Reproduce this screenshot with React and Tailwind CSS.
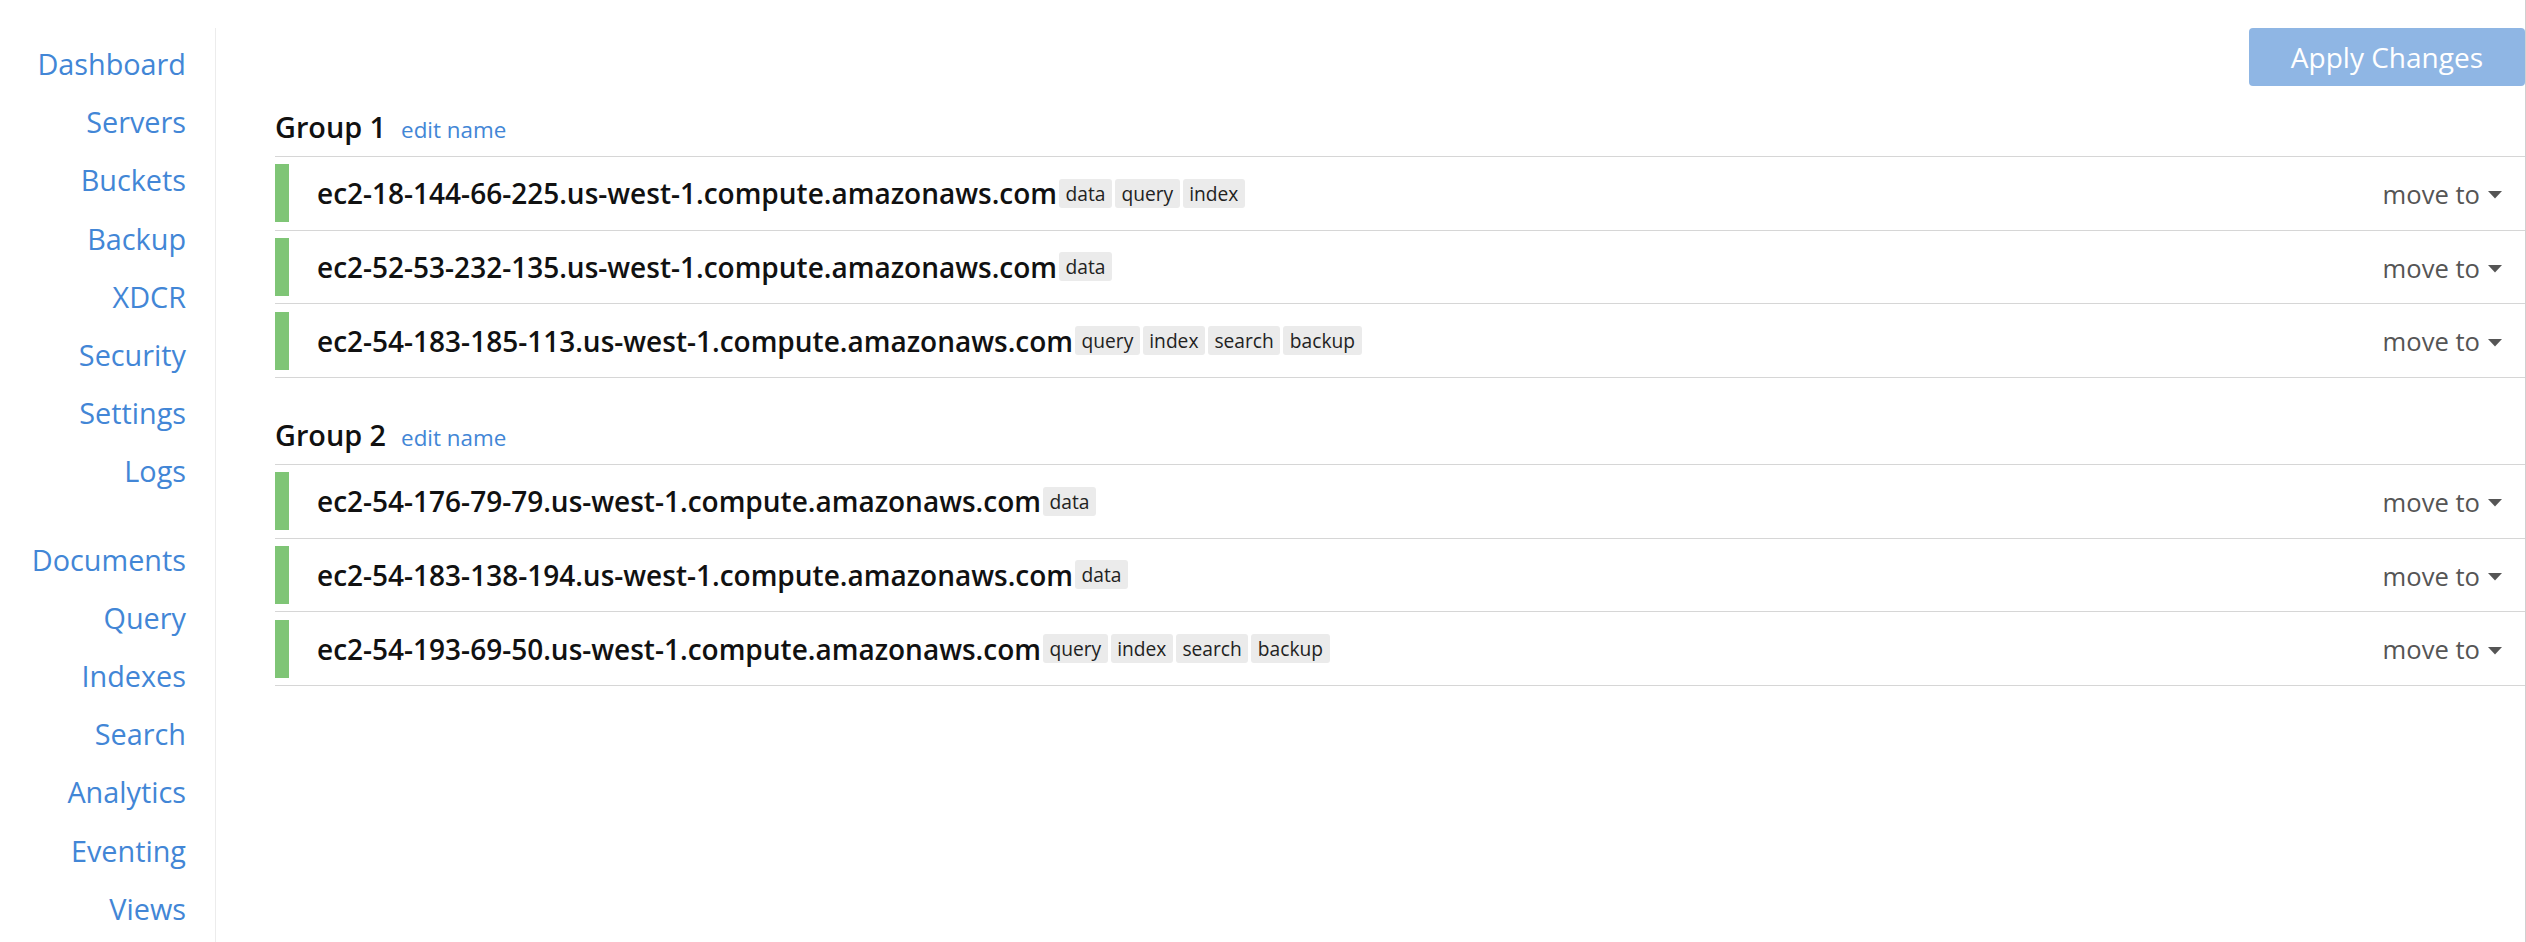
import React from 'react';

const navTop = ['Dashboard', 'Servers', 'Buckets', 'Backup', 'XDCR', 'Security', 'Settings', 'Logs'];
const navBottom = ['Documents', 'Query', 'Indexes', 'Search', 'Analytics', 'Eventing', 'Views'];

const groups = [
  {
    name: 'Group 1',
    servers: [
      { host: 'ec2-18-144-66-225.us-west-1.compute.amazonaws.com', services: ['data', 'query', 'index'] },
      { host: 'ec2-52-53-232-135.us-west-1.compute.amazonaws.com', services: ['data'] },
      { host: 'ec2-54-183-185-113.us-west-1.compute.amazonaws.com', services: ['query', 'index', 'search', 'backup'] },
    ],
  },
  {
    name: 'Group 2',
    servers: [
      { host: 'ec2-54-176-79-79.us-west-1.compute.amazonaws.com', services: ['data'] },
      { host: 'ec2-54-183-138-194.us-west-1.compute.amazonaws.com', services: ['data'] },
      { host: 'ec2-54-193-69-50.us-west-1.compute.amazonaws.com', services: ['query', 'index', 'search', 'backup'] },
    ],
  },
];

function ServerRow({ server }) {
  return (
    <div className="flex items-center border-b border-[#d6d6d6] py-[7.33px]">
      <div className="w-[14px] h-[58px] bg-[#7fc576] shrink-0" />
      <span className="ml-[28px] text-[28px] leading-[1.5] font-semibold text-[#111]">
        {server.host}
      </span>
      <div className="ml-[2px] flex items-center gap-[3px]">
        {server.services.map((s) => (
          <span key={s} className="px-[6.5px] text-[19.2px] leading-[29px] bg-[#ebebeb] rounded-[3px] text-[#222]">
            {s}
          </span>
        ))}
      </div>
      <div className="ml-auto pr-[23px] pt-[4px] flex items-center text-[25.6px] leading-[1.5] text-[#555]">
        move to
        <svg className="ml-[8px]" width="14" height="8" viewBox="0 0 14 8">
          <path d="M0 0 L14 0 L7 7.5 Z" fill="#555" />
        </svg>
      </div>
    </div>
  );
}

function App() {
  return (
    <div className="flex min-h-screen bg-white font-['Open_Sans',sans-serif]">
      {/* Sidebar */}
      <aside className="w-[216px] shrink-0 pt-[28px] flex flex-col">
        <nav className="flex-1 border-r border-[#ececec] pt-[7px] pr-[29px] text-right text-[28.8px] text-[#4286d6]">
          {navTop.map((item) => (
            <a key={item} href="#" className="block leading-[58.2px]">
              {item}
            </a>
          ))}
          <div className="h-[30px]" />
          {navBottom.map((item) => (
            <a key={item} href="#" className="block leading-[58.2px]">
              {item}
            </a>
          ))}
        </nav>
      </aside>

      {/* Main */}
      <main className="flex-1 pl-[59px] pt-[28px] border-r border-[#d0d0d0]">
        <div className="flex justify-end">
          <button className="h-[58px] px-[42px] rounded-[4px] bg-[#8fb6e4] text-white text-[28px]">
            Apply Changes
          </button>
        </div>

        {groups.map((group, i) => (
          <div key={group.name} className={i === 0 ? 'mt-[19.2px]' : 'mt-[35.2px]'}>
            <div className="flex items-baseline leading-[1.5] mb-[7.6px]">
              <h2 className="text-[28.8px] font-semibold text-[#111]">{group.name}</h2>
              <a href="#" className="ml-[15px] text-[22.4px] text-[#4286d6]">edit name</a>
            </div>
            <div className="border-t border-[#d6d6d6]">
              {group.servers.map((server) => (
                <ServerRow key={server.host} server={server} />
              ))}
            </div>
          </div>
        ))}
      </main>
    </div>
  );
}

export default App;
